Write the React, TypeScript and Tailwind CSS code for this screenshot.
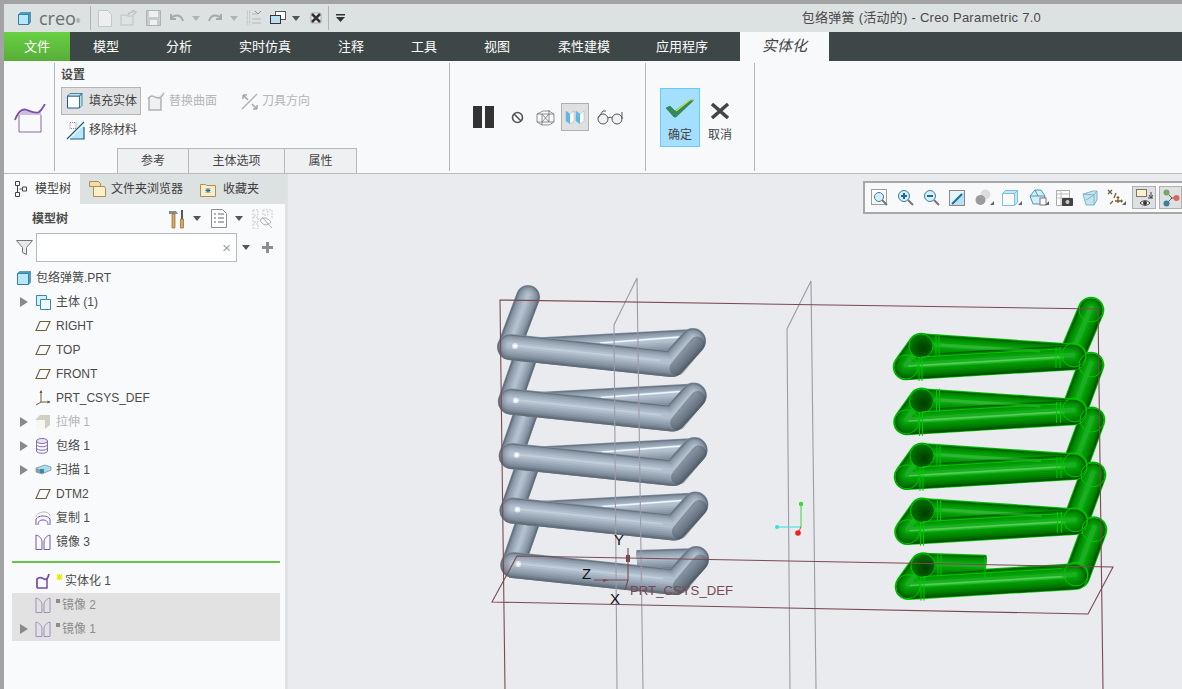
import type { ReactNode } from "react"

const sans = "font-['Liberation_Sans','Noto_Sans_CJK_SC',sans-serif]"

function Ico({ w, h, className, children }: { w: number; h: number; className?: string; children: ReactNode }) {
    return (
        <svg width={w} height={h} viewBox={`0 0 ${w} ${h}`} className={"shrink-0 block " + (className || "")} fill="none">
            {children}
        </svg>
    )
}

const Drop = ({ className, c = "#555" }: { className?: string; c?: string }) => (
    <Ico w={8} h={5} className={className}><path d="M0 0h8L4 5z" fill={c} /></Ico>
)

const Cube = ({ s = 16 }: { s?: number }) => (
    <Ico w={s} h={s}>
        <path d={`M1.500 3.500h${s - 5}v${s - 5}h-${s - 5}z`} fill="#b8e6fb" stroke="#2f7fa3" />
        <path d={`M1.500 3.500l2-2h${s - 5}l-2 2zM${s - 3.5} 3.500l2-2v${s - 5}l-2 2z`} fill="#4f9cc0" stroke="#2f7fa3" strokeWidth=".6" />
    </Ico>
)

const Plane = () => (
    <Ico w={16} h={12}><path d="M5 1.500h10l-4 9H1z" stroke="#6e5a3c" strokeWidth="1.100" /></Ico>
)

const Mirror = ({ faded }: { faded?: boolean }) => (
    <Ico w={16} h={16} className={faded ? "opacity-60" : ""}>
        <path d="M1 15.500V1c4 1 6 4 6 7v7.500zM15 15.500V1c-4 1-6 4-6 7v7.500z" stroke="#7a58a8" strokeWidth="1" />
    </Ico>
)

const Arrow = () => (
    <Ico w={8} h={10}><path d="M0 0l8 5-8 5z" fill="#8a8a8a" /></Ico>
)

const treeRows: { label: string; arrow?: boolean; icon: ReactNode; faded?: boolean }[] = [
    { label: "主体 (1)", arrow: true, icon: <Ico w={17} h={17}><path d="M1.500 1.500h10v10h-10z" fill="#d6f0fb" stroke="#3c88ad" /><path d="M5.500 5.500h10v10h-10z" fill="#eef9fe" stroke="#3c88ad" /></Ico> },
    { label: "RIGHT", icon: <Plane /> },
    { label: "TOP", icon: <Plane /> },
    { label: "FRONT", icon: <Plane /> },
    { label: "PRT_CSYS_DEF", icon: <Ico w={16} h={16}><path d="M6 1v11M6 12h9M6 12l-5 3" stroke="#6e5a3c" /><path d="M6 0l-1.500 3h3zM15.500 12l-3-1.500v3z" fill="#6e5a3c" /></Ico> },
    { label: "拉伸 1", arrow: true, faded: true, icon: <Ico w={16} h={16}><path d="M5 1h10v10l-5 4H1V5z" fill="#cfcfc4" /><path d="M1 6h9v9H1z" fill="#f6f6f2" /></Ico> },
    { label: "包络 1", arrow: true, icon: <Ico w={14} h={16}><ellipse cx="7" cy="3" rx="5.500" ry="2.500" fill="#e9e2f2" stroke="#8a6fb0" /><path d="M1.500 3v10c0 3 11 3 11 0V3M1.500 6.500c0 3 11 3 11 0M1.500 10c0 3 11 3 11 0" stroke="#8a6fb0" /></Ico> },
    { label: "扫描 1", arrow: true, icon: <Ico w={17} h={12}><path d="M1 4l9-3 6 2v3l-9 4-6-2z" fill="#a6dcee" stroke="#6f8d99" strokeWidth=".7" /><path d="M1 4l6 2v4l-6-2z" fill="#8d9ba3" /><rect x="5" y="5" width="4" height="4" fill="#3c88ad" /></Ico> },
    { label: "DTM2", icon: <Plane /> },
    { label: "复制 1", icon: <Ico w={16} h={16}><path d="M1 7c0-5 13-8 14-1" stroke="#b8b8b8" fill="#fff" /><path d="M1 15V9c2-2 3-3 7-3s5 1 7 3v6M3 15c0-4 2-5 5-5s5 1 5 5" stroke="#7a58a8" /></Ico> },
    { label: "镜像 3", icon: <Mirror /> },
]

function TreeRow({ arrow, icon, label, faded, mark }: { arrow?: boolean; icon: ReactNode; label: string; faded?: boolean; mark?: ReactNode }) {
    return (
        <div className="flex h-6 items-center">
            <div className="w-[31px] flex justify-end pr-[7px]">{arrow && <Arrow />}</div>
            <div className="w-[21px] flex justify-start">{icon}</div>
            {mark}
            <span className={"text-xs " + (faded ? "text-[#b5b5b5]" : "text-[#4b4b4b]")}>{label}</span>
        </div>
    )
}

function ModelTreePanel() {
    return (
        <div className="w-[284px] shrink-0 flex flex-col bg-[#f8fafb] border-r-[3px] border-[#e0e3e6]">
            <div className="flex h-[30px] bg-[#dce1e1] text-xs text-[#3d3d3d]">
                <div className="w-[76px] bg-[#f8fafb] flex items-center pl-[11px] gap-[8px]">
                    <Ico w={12} h={16}><path d="M.5.500h4v4h-4zM.5 11.500h4v4h-4zM7.500 6h4v4h-4zM2.500 5v6M4.500 8h3" stroke="#444" /></Ico>
                    <span>模型树</span>
                </div>
                <div className="flex items-center pl-[8px] gap-[4px]">
                    <Ico w={19} h={18}><path d="M1.500 1.500h9l2 2v3h-11z" fill="#f2dca8" stroke="#b08d50" /><path d="M5.500 6.500h11l1 2v8h-12z" fill="#fbeec8" stroke="#b08d50" /></Ico>
                    <span>文件夹浏览器</span>
                </div>
                <div className="flex items-center pl-[17px] gap-[7px]">
                    <Ico w={16} h={15}><path d="M.5 2.500h5l1 1h9v11H.5z" fill="#fbeec8" stroke="#b08d50" /><path d="M8 6v5M5.500 8.500h5M6 6.500l4 4M10 6.500l-4 4" stroke="#1a6f96" /></Ico>
                    <span>收藏夹</span>
                </div>
            </div>

            <div className="flex h-[29px] items-center">
                <span className="ml-[28px] text-xs font-bold text-[#4a4a4a] w-[136px]">模型树</span>
                <Ico w={17} h={20}>
                    <path d="M1 2h7l2 3H1z" fill="#8a8a8a" />
                    <path d="M4 5h3v14H4z" fill="#d9a860" stroke="#8c6a38" strokeWidth=".7" />
                    <path d="M14 1v9" stroke="#555" strokeWidth="2" />
                    <path d="M12.500 10h3v9h-3z" fill="#d9a860" stroke="#8c6a38" strokeWidth=".7" />
                </Ico>
                <Drop className="ml-[8px]" />
                <Ico w={16} h={19} className="ml-[10px]">
                    <path d="M.5.500h11l4 4v14H.5z" fill="#fff" stroke="#8a8f92" />
                    <path d="M3 5h2M3 9h2M3 13h2M7 5h6M7 9h6M7 13h6" stroke="#5d6468" />
                </Ico>
                <Drop className="ml-[8px]" />
                <Ico w={21} h={20} className="ml-[9px] opacity-40">
                    <path d="M1 1h5v5H1zM1 8h5v5H1zM1 15h5v5H1zM11 1h5v5h-5zM17 1h3v9" stroke="#888" strokeDasharray="2 1" />
                    <path d="M8 11c3-3 7-3 11 2-4 4-8 4-11-2zM10 8l10 11" stroke="#444" />
                </Ico>
            </div>

            <div className="flex h-[29px] items-center">
                <Ico w={17} h={15} className="ml-[12px]"><path d="M.5.500h16l-6 7v7l-4-2v-5z" fill="#e8eaea" stroke="#777" /></Ico>
                <div className="ml-[3px] w-[201px] h-[29px] bg-white border border-[#b4bcbc] flex items-center justify-end pr-[5px]">
                    <span className="text-[15px] leading-none text-[#9aa0a3]">×</span>
                </div>
                <Drop className="ml-[5px]" />
                <Ico w={13} h={13} className="ml-[11px]"><path d="M5 1h3v4h4v3H8v4H5V8H1V5h4z" fill="#8e8e8e" /></Ico>
            </div>

            <div className="mt-[4px] flex h-6 items-center">
                <div className="w-[12px]" />
                <div className="w-[20px]"><Cube /></div>
                <span className="text-xs text-[#4b4b4b]">包络弹簧.PRT</span>
            </div>

            {treeRows.map((r) => (
                <TreeRow key={r.label} {...r} />
            ))}

            <div className="ml-[8px] mt-[7px] h-[2px] w-[268px] bg-[#66c544]" />

            <div className="mt-[6px]">
                <TreeRow
                    label="实体化 1"
                    mark={<Ico w={9} h={12} className="self-start mt-[4px]"><path d="M3.500 1v6M.5 4h6M1 1.500l5 5M6 1.500l-5 5" stroke="#e8e800" strokeWidth="1.200" /></Ico>}
                    icon={
                        <Ico w={16} h={16}><path d="M2 15V6c3-3 5-1 7 0s4 0 5-5" stroke="#7a4fa8" strokeWidth="1.800" /><path d="M2 15h10V6" stroke="#7a4fa8" strokeWidth="1.500" /></Ico>
                    }
                />
            </div>
            <div className="ml-[8px] w-[268px] bg-[#e2e2e2]">
                {["镜像 2", "镜像 1"].map((l, i) => (
                    <div key={l} className="flex h-6 items-center -ml-[8px]">
                        <div className="w-[31px] flex justify-end pr-[7px]">{i === 1 && <Arrow />}</div>
                        <div className="w-[21px]"><Mirror faded /></div>
                        <div className="w-[4px] h-[4px] mr-[2px] self-start mt-[6px] bg-[#8c8c8c]" />
                        <span className="text-xs text-[#8c8c8c]">{l}</span>
                    </div>
                ))}
            </div>
        </div>
    )
}

type Layer = { d: number; c: string; y: number }

// lighter upper rim, dark lower rim, bright band above the centre line
const grayLayers: Layer[] = [
    { d: 0, c: "#84919f", y: 0 },
    { d: 0.800, c: "#626e7b", y: 0.400 },
    { d: 3.500, c: "#74818f", y: -0.400 },
    { d: 6, c: "#84919f", y: -1 },
    { d: 9, c: "#909dac", y: -1.500 },
    { d: 12.500, c: "#9ba8b7", y: -1.800 },
    { d: 16, c: "#a6b3c2", y: -2 },
    { d: 20, c: "#b2bfcd", y: -2 },
]
const greenLayers: Layer[] = [
    { d: 0, c: "#008a00", y: 0 },
    { d: 0.800, c: "#005400", y: 0.400 },
    { d: 3.500, c: "#006c00", y: -0.400 },
    { d: 6, c: "#007e00", y: -1 },
    { d: 9, c: "#008c00", y: -1.500 },
    { d: 12.500, c: "#009804", y: -1.800 },
    { d: 16, c: "#06a20c", y: -2 },
    { d: 20, c: "#1cae22", y: -2 },
]

function Tube({ d, w, layers, cap = "round" }: { d: string; w: number; layers: Layer[]; cap?: "round" | "butt" }) {
    return (
        <g fill="none" strokeLinecap={cap} strokeLinejoin="round">
            {layers.map((l, i) =>
                w - l.d > 0 ? <path key={i} d={d} stroke={l.c} strokeWidth={w - l.d} transform={`translate(0 ${l.y})`} /> : null,
            )}
        </g>
    )
}

const rows = [0, 1, 2, 3, 4]

function GraySpring() {
    return (
        <g>
            <Tube d="M528 297L511 342" w={24} layers={grayLayers} />
            {[0, 1, 2, 3].map((i) => (
                <Tube key={i} d={`M${525 + i} ${358 + i * 54.500}L${511 + i} ${398 + i * 54.500}`} w={24} layers={grayLayers} />
            ))}
            {rows.map((i) => {
                const y = i * 54.500
                const x = i * 0.800
                const turn = `${693 + x} ${341 + y}`
                const end = `${672 + x} ${364 + y}`
                return (
                    <g key={i}>
                        {i < 4 ? (
                            <Tube d={`M${527 + x} ${350 + y}L${turn}L${end}`} w={24} layers={grayLayers} />
                        ) : (
                            <Tube d={`M637 ${343 + y}L${turn}`} w={22} layers={grayLayers} cap="butt" />
                        )}
                        {i < 4 && (
                            <g stroke="#eef7fd">
                                <path d={`M${590 + x} ${344 + y}L${680 + x} ${337 + y}`} strokeWidth="3" opacity=".2" />
                                <path d={`M${600 + x} ${343 + y}L${680 + x} ${337 + y}`} strokeWidth="1.300" />
                            </g>
                        )}
                        <Tube d={`M${510 + x} ${347 + y}L${end}L${turn}`} w={26} layers={grayLayers} />
                        <g stroke="#3f4a55" strokeLinecap="round" opacity=".4" fill="none">
                            <path d={`M${677 + x} ${368 + y}L${697 + x} ${344 + y}`} strokeWidth="15" />
                            <path d={`M${679 + x} ${370 + y}L${699 + x} ${346 + y}`} strokeWidth="10" />
                            <path d={`M${680 + x} ${371 + y}L${700 + x} ${347 + y}`} strokeWidth="6" />
                        </g>
                        <path d={`M${515 + x} ${345.500 + y}L${660 + x} ${360.500 + y}`} stroke="#c6d3e0" strokeWidth="2" opacity=".7" />
                        <circle cx={515 + x} cy={346 + y} r="3" fill="#fff" opacity=".6" />
                        <circle cx={515 + x} cy={346 + y} r="1.500" fill="#fff" />
                    </g>
                )
            })}
        </g>
    )
}

function GreenSpring() {
    const o = "#00c800"
    const edge = (d: string, w: number, key: string, cap: "round" | "butt" = "round") => (
        <path key={key} d={d} stroke={o} strokeWidth={w + 1.600} strokeLinecap={cap} strokeLinejoin="round" />
    )
    return (
        <g>
            <defs>
                <radialGradient id="endFace" cx="0.600" cy="0.600" r="0.600">
                    <stop offset="0" stopColor="#003c00" />
                    <stop offset="1" stopColor="#007400" />
                </radialGradient>
            </defs>
            {edge("M1091 310L1072 355", 25, "s")}
            <Tube d="M1091 310L1072 355" w={25} layers={greenLayers} />
            {[0, 1, 2, 3].map((i) => {
                const d = `M${1091 + i} ${365 + i * 54.900}L${1074 + i} ${411 + i * 54.900}`
                return (
                    <g key={i}>
                        {edge(d, 25, "l")}
                        <Tube d={d} w={25} layers={greenLayers} />
                    </g>
                )
            })}
            {rows.map((i) => {
                const y = i * 54.900
                const x = i * 0.500
                const fl = `${906 + x} ${367 + y}`
                const bl = `${921 + x} ${346 + y}`
                const back = i < 4 ? `M${1068 + x} ${356 + y}L${bl}L${fl}` : `M986 ${348 + y}L${bl}L${fl}`
                const front = `M${1073 + x} ${357 + y}L${fl}L${bl}`
                return (
                    <g key={i}>
                        {edge(back, 24, "b", i < 4 ? "round" : "butt")}
                        {edge(front, 25, "f")}
                        <Tube d={back} w={24} layers={greenLayers} cap={i < 4 ? "round" : "butt"} />
                        <Tube d={front} w={25} layers={greenLayers} />
                        <circle cx={921 + x} cy={346 + y} r="12" fill="url(#endFace)" stroke={o} />
                        <path d={`M${920 + x} ${366 + y}L${1064 + x} ${357.500 + y}`} stroke="#4ccb4c" strokeWidth="3" opacity=".45" />
                        <path d={`M${908 + x} ${366 + y}L${1060 + x} ${357 + y}`} stroke="#5fd85f" strokeWidth="1.500" opacity=".7" />
                        {i < 4 && <path d={`M${940 + x} ${345 + y}L${1040 + x} ${351 + y}`} stroke="#3dbd3d" strokeWidth="3" opacity=".5" />}
                        <circle cx={906 + x} cy={367 + y} r="12" stroke={o} />
                        <path
                            d={`M${919 + x} ${357 + y}v24M${922 + x} ${357 + y}v24M${939 + x} ${334 + y}v23M${936 + x} ${334 + y}v23M${921 + x} ${357 + y}L${1060 + x} ${349 + y}`}
                            stroke={o}
                        />
                        {i < 4 ? (
                            <path d={`M${1056 + x} ${347 + y}v21M${1060 + x} ${347 + y}v21`} stroke={o} />
                        ) : (
                            <path d={`M${985} ${337 + y}v21`} stroke={o} />
                        )}
                        {i < 4 ? <circle cx={1074 + x} cy={355 + y} r="12" stroke={o} /> : null}
                    </g>
                )
            })}
            {[0, 1, 2, 3].map((i) => (
                <circle key={i} cx={1091 + i} cy={365 + i * 54.900} r="12" stroke={o} />
            ))}
            <circle cx="1091" cy="310" r="12" stroke={o} />
            <circle cx="1076" cy="574" r="12" stroke={o} />
        </g>
    )
}

function Viewport() {
    return (
        <svg viewBox="288 174 894 515" width="894" height="515" className="block absolute inset-0" fill="none">
            <GraySpring />
            <GreenSpring />
            <g stroke="#9c9ca6" strokeWidth="1.100">
                <path d="M617 689L614 325L637 278L643 689" />
                <path d="M790 689L787 329L811 281L816 689" />
            </g>
            <g stroke="#7a4a50" strokeWidth="1.100">
                <path d="M505 689L500 300L1098 309L1103 689" />
                <path d="M517 556L1113 567L1088 614L492 602z" />
                <path d="M628 548V580H594M628 580l-3 10" />
            </g>
            <path d="M626 555h4v7h-4zM603 579l6 1-6 2z" fill="#7a4a50" />
            <text x="630" y="595" fontSize="13.200" fill="#7a4a50" fontFamily="Liberation Sans">PRT_CSYS_DEF</text>
            <g fontSize="15" fill="#111" fontFamily="Liberation Sans">
                <text x="614" y="545">Y</text>
                <text x="582" y="579">Z</text>
                <text x="610" y="604">X</text>
            </g>
            <path d="M801 527H777" stroke="#33e0e0" />
            <path d="M801 504V527" stroke="#33dd33" />
            <path d="M801 527l-3 6" stroke="#ee3333" />
            <circle cx="801" cy="504" r="2.200" fill="#33dd33" />
            <circle cx="777" cy="527" r="2" fill="#33e0e0" />
            <circle cx="798" cy="533" r="2.800" fill="#ee2222" />
        </svg>
    )
}

const Corner = ({ className }: { className?: string }) => (
    <Ico w={4} h={4} className={"absolute right-[-1px] bottom-[1px] " + (className || "")}><path d="M4 0v4H0z" fill="#666" /></Ico>
)

function ViewToolbar() {
    return (
        <div className="absolute right-0 top-[7px] w-[319px] h-[33px] bg-[#f8f9fb] border-2 border-r-0 border-[#a8a8a8] flex items-center pl-[6px]">
            <Ico w={17} h={17}><rect x=".5" y=".5" width="15" height="15" stroke="#9aa0a5" fill="#fff" /><circle cx="8" cy="8" r="4.500" stroke="#3c7f9f" fill="#d8eef8" /><path d="M11 11l5 5" stroke="#777" strokeWidth="2" /></Ico>
            <Ico w={17} h={17} className="ml-[9px]"><circle cx="7" cy="7" r="5.500" stroke="#3c7f9f" fill="#d8eef8" /><path d="M4 7h6M7 4v6" stroke="#1a6f96" strokeWidth="2" /><path d="M11 11l5 5" stroke="#777" strokeWidth="2" /></Ico>
            <Ico w={17} h={17} className="ml-[9px]"><circle cx="7" cy="7" r="5.500" stroke="#3c7f9f" fill="#d8eef8" /><path d="M4 7h6" stroke="#1a6f96" strokeWidth="2" /><path d="M11 11l5 5" stroke="#777" strokeWidth="2" /></Ico>
            <Ico w={16} h={16} className="ml-[9px]"><rect x=".5" y=".5" width="15" height="15" stroke="#888" fill="#e4f4fc" /><path d="M2 15L15 2v13z" fill="#b8e0f2" /><path d="M3 14L13 4" stroke="#1f6f92" strokeWidth="2" /></Ico>
            <div className="relative ml-[10px] w-[18px]">
                <Ico w={16} h={17}><circle cx="10.500" cy="5.500" r="5" fill="#dcdcdc" /><circle cx="5.500" cy="11" r="5" fill="#9b9b9b" /></Ico>
                <Corner />
            </div>
            <div className="relative ml-[9px] w-[19px]">
                <Ico w={16} h={16}><path d="M.5 3.500h12v12H.5z" fill="#fff" stroke="#79c1de" /><path d="M.5 3.500l3-3h12l-3 3zM12.500 3.500l3-3v12l-3 3z" fill="#c4e6f4" stroke="#79c1de" /></Ico>
                <Corner />
            </div>
            <div className="relative ml-[8px] w-[19px]">
                <Ico w={18} h={17}><path d="M1 7l5-6h6l4 6-3 8H4z" fill="#d6eef8" stroke="#4a96b8" /><path d="M1 7h15M6 1l3 6" stroke="#4a96b8" /><rect x="11" y="9" width="6" height="7" fill="#fff" stroke="#777" /></Ico>
                <Corner />
            </div>
            <Ico w={17} h={16} className="ml-[8px]"><path d="M.5.500h13v15H.5z" fill="#fff" stroke="#aaa" /><path d="M.5 4h13M.5 8h13M5 .5v15" stroke="#bbb" /><rect x="6" y="8" width="11" height="8" rx="1" fill="#444" /><circle cx="11.500" cy="12" r="2" fill="#ccc" /></Ico>
            <Ico w={16} h={16} className="ml-[9px]"><path d="M1 4l10-3h4v9l-3 5H4z" fill="#c6e4f0" stroke="#7fb5cc" /><path d="M1 4l11 1v10M12 5l3-4M4 10l8-5" stroke="#7fb5cc" /></Ico>
            <div className="relative ml-[9px] w-[18px]">
                <Ico w={17} h={17}><path d="M1 1l4 4M5 1L1 5M7 9l2-5M3 15l3-3M8 12h7M11 8v6" stroke="#7a5c2e" strokeWidth="1.300" /><path d="M11 7l-2 2h4zM16 12l-2-2v4z" fill="#7a5c2e" /></Ico>
                <Corner />
            </div>
            <div className="ml-[7px] w-[24px] h-[23px] bg-[#dfe0e2] border border-[#b0b0b0] flex items-center justify-center">
                <Ico w={17} h={18}><rect x=".5" y=".5" width="10" height="7" fill="#fbf2cc" stroke="#777" /><path d="M15 3v6M12 9h5M13 6l2 3 2-3" stroke="#444" /><path d="M4 14c3-3 7-3 10 0-3 3-7 3-10 0z" stroke="#333" fill="#fff" /><circle cx="9" cy="14" r="2" fill="#333" /></Ico>
            </div>
            <div className="ml-[3px] w-[23px] h-[23px] bg-[#dfe0e2] border border-[#b0b0b0] flex items-center justify-center">
                <Ico w={18} h={18}><path d="M5 4l5 5-5 5M10 9h4" stroke="#555" /><circle cx="4.500" cy="3.500" r="3" fill="#72a868" /><circle cx="4.500" cy="14.500" r="3" fill="#3c7f9f" /><circle cx="14.500" cy="9" r="3" fill="#d26a60" /></Ico>
            </div>
        </div>
    )
}

const tabs = [
    { t: "模型", w: "w-[72px]" },
    { t: "分析", w: "w-[74px]" },
    { t: "实时仿真", w: "w-[98px]" },
    { t: "注释", w: "w-[74px]" },
    { t: "工具", w: "w-[72px]" },
    { t: "视图", w: "w-[74px]" },
    { t: "柔性建模", w: "w-[100px]" },
    { t: "应用程序", w: "w-[96px]" },
]

const Sep = () => <div className="w-[1px] shrink-0 my-[2px] bg-[#b2b4b6]" />

export default function App() {
    return (
        <div className={"w-[1182px] h-[689px] overflow-hidden bg-[#a3a3a3] pl-[4px] pt-[4px] flex flex-col " + sans}>
            <div className="h-[28px] shrink-0 bg-[#dce1e1] flex items-center">
                <div className="ml-[13px]"><Cube s={15} /></div>
                <span className="ml-[7px] text-[18px] leading-none text-[#6a6e70] font-['Open_Sans',sans-serif] w-[45px]">creo<sup className="text-[5px]">®</sup></span>
                <div className="ml-[6px] w-[1px] h-[24px] bg-[#b0b4b4]" />
                <Ico w={14} h={17} className="ml-[7px]"><path d="M.5.500h9l4 4v12H.5z" fill="#edefef" stroke="#c4c8c8" /></Ico>
                <Ico w={17} h={16} className="ml-[8px]"><path d="M1 15V5h5l1 1h6v9z" fill="#dfe2e2" stroke="#bcc0c0" /><path d="M8 5c1-3 3-3 5-3M12 0l4 2-3 3" stroke="#bcc0c0" strokeWidth="1.500" /></Ico>
                <Ico w={15} h={16} className="ml-[9px]"><path d="M.5.500h14v15H.5z" fill="#c8cccc" stroke="#aeb2b2" /><path d="M3 1h9v6H3zM4 10h7v5H4z" fill="#eef0f0" /></Ico>
                <Ico w={16} h={12} className="ml-[8px]"><path d="M2 2v5h5M2 7c3-5 10-5 12 2" stroke="#a6aaaa" strokeWidth="2" /></Ico>
                <Drop c="#b0b4b4" className="ml-[7px]" />
                <Ico w={16} h={12} className="ml-[7px]"><path d="M14 2v5H9M14 7C11 2 4 2 2 9" stroke="#a6aaaa" strokeWidth="2" /></Ico>
                <Drop c="#b0b4b4" className="ml-[7px]" />
                <Ico w={15} h={16} className="ml-[8px]"><path d="M1 1h3v3H1zM1 6h3v3H1zM1 11h3v3H1z" stroke="#b4b8b8" strokeDasharray="1 1" /><path d="M6 4h5M6 9h9M6 13h9" stroke="#b4b8b8" /><path d="M9 1l3 3 3-3" stroke="#8c9090" /></Ico>
                <Ico w={16} h={15} className="ml-[9px]"><rect x="5.500" y=".5" width="10" height="8" fill="#fff" stroke="#555" /><rect x=".5" y="4.500" width="10" height="8" fill="#b8e0f2" stroke="#333" /></Ico>
                <Drop className="ml-[6px]" />
                <Ico w={12} h={12} className="ml-[10px]"><path d="M1 1h10v10H1z" fill="#eee" stroke="#999" strokeWidth=".7" /><path d="M2 2l8 8M10 2l-8 8" stroke="#333" strokeWidth="2.500" /></Ico>
                <div className="ml-[6px] w-[1px] h-[24px] bg-[#b0b4b4]" />
                <Ico w={9} h={8} className="ml-[7px]"><path d="M0 0h9v1.500H0zM0 3h9L4.500 8z" fill="#333" /></Ico>
                <span className="ml-auto mr-[141px] text-[13px] tracking-[0.25px] text-[#4a4a4a]">包络弹簧 (活动的) - Creo Parametric 7.0</span>
            </div>

            <div className="h-[29px] shrink-0 bg-[#3e4748] flex text-[13px] text-white">
                <div className="w-[66px] bg-gradient-to-b from-[#68d043] to-[#58ad38] flex items-center justify-center">文件</div>
                {tabs.map((t) => (
                    <div key={t.t} className={t.w + " flex items-center justify-center"}>{t.t}</div>
                ))}
                <div className="ml-[10px] w-[89px] bg-[#f8f9fb] flex items-center justify-center italic text-[15px] text-[#444]">实体化</div>
            </div>

            <div className="h-[113px] shrink-0 bg-[#f8f9fb] border-b border-[#bcbcbc] flex text-xs text-[#444]">
                <div className="w-[50px] flex items-center justify-center pl-[2px] pt-[3px]">
                    <Ico w={32} h={30}>
                        <path d="M5 11C9 5 13 6 17 8s7 2 10-3v6z" fill="#cdbde0" />
                        <path d="M5 28V11M27 11V28H5" stroke="#8c64a8" />
                        <path d="M1 16C4 8 8 4 13 6c5 2 9 4 12 2 3-2 4-5 6-8" stroke="#7a4fa8" strokeWidth="1.800" />
                    </Ico>
                </div>
                <Sep />
                <div className="w-[394px] flex flex-col pl-[6px]">
                    <div className="pt-[6px] h-[26px] font-bold text-[#4a4a4a]">设置</div>
                    <div className="flex items-center">
                        <div className="w-[80px] h-[28px] bg-[#e0e1e3] border border-[#b5b5b5] flex items-center pl-[5px] gap-[6px]">
                            <Ico w={16} h={16}><path d="M.5 3h12v12H.5z" fill="#fff" stroke="#1d5f80" /><path d="M.5 3l2.500-2.500h12L12.500 3zM12.500 3L15 .5v12l-2.500 2.500z" fill="#b8e0f2" stroke="#1d5f80" strokeWidth=".7" /></Ico>
                            <span>填充实体</span>
                        </div>
                        <div className="ml-[4px] flex items-center gap-[4px] text-[#b4b6b8]">
                            <Ico w={20} h={19}><path d="M3 7c4-6 6-1 10-1s4-3 6-5M4 6v12h12V6" stroke="#b0b2b4" strokeWidth="1.500" fill="#f0f1f2" /></Ico>
                            <span>替换曲面</span>
                        </div>
                        <div className="ml-[24px] flex items-center gap-[4px] text-[#b4b6b8]">
                            <Ico w={17} h={17}><path d="M1 16L16 1" stroke="#b0b2b4" strokeWidth="1.500" /><path d="M2 2l5 5M2 2v4M2 2h4M11 11l5 5M16 16v-4M16 16h-4" stroke="#a4a6a8" strokeWidth="1.500" /></Ico>
                            <span>刀具方向</span>
                        </div>
                    </div>
                    <div className="mt-[3px] h-[24px] flex items-center pl-[5px] gap-[4px]">
                        <Ico w={19} h={19}><path d="M4 1.500h6v6H4z" stroke="#888" strokeDasharray="1 1" /><path d="M4 18h14V4z" fill="#b8e6fb" /><path d="M1 18L18 1M4 18h14V6" stroke="#1d5f80" strokeWidth="1.200" /></Ico>
                        <span>移除材料</span>
                    </div>
                    <div className="mt-auto ml-[56px] flex h-[25px] text-[#444]">
                        {[
                            { t: "参考", w: "w-[72px]" },
                            { t: "主体选项", w: "w-[97px]" },
                            { t: "属性", w: "w-[73px]" },
                        ].map((x) => (
                            <div key={x.t} className={x.w + " bg-[#eff0f2] border border-b-0 border-[#b8b8b8] -mr-[1px] flex items-center justify-center"}>{x.t}</div>
                        ))}
                    </div>
                </div>
                <Sep />
                <div className="w-[195px] flex items-center pl-[23px]">
                    <div className="flex gap-[3px]">
                        <div className="w-[9px] h-[22px] bg-[#333]" />
                        <div className="w-[9px] h-[22px] bg-[#333]" />
                    </div>
                    <Ico w={13} h={13} className="ml-[17px]"><circle cx="6.500" cy="6.500" r="5" stroke="#555" strokeWidth="1.600" /><path d="M3 3l7 7" stroke="#555" strokeWidth="1.600" /></Ico>
                    <Ico w={19} h={17} className="ml-[12px]"><path d="M1 5l6-3 6 0 5 3v8l-5 3H6l-5-3zM6 5v11M13 1v12M1 5h17M1 13h17M6 5l7 8M13 5l-7 8" stroke="#666" strokeWidth=".7" /></Ico>
                    <div className="ml-[6px] w-[28px] h-[28px] bg-[#dfe0e2] border border-[#b0b0b0] flex items-center justify-center">
                        <Ico w={20} h={15}><path d="M1 1l4 3 4-3v10l-4 3-4-3z" fill="#fff" stroke="#9ab" strokeWidth=".5" /><path d="M11 1l4 3 4-3v10l-4 3-4-3z" fill="#fff" stroke="#9ab" strokeWidth=".5" /><path d="M1 1l4 3v10l-4-3zM11 1l4 3v10l-4-3z" fill="#5cb8e6" /></Ico>
                    </div>
                    <Ico w={27} h={15} className="ml-[8px]"><circle cx="6" cy="9" r="5" stroke="#555" fill="#eef3f6" /><circle cx="20" cy="9" r="5" stroke="#555" fill="#eef3f6" /><path d="M11 8c1-1 3-1 4 0M1 8l5-7h3M25 9V2" stroke="#555" /></Ico>
                </div>
                <Sep />
                <div className="w-[108px] flex items-start pl-[14px] pt-[27px]">
                    <div className="w-[40px] h-[59px] bg-[#a4dfff] border border-[#6cc8ff] flex flex-col items-center pt-[10px]">
                        <Ico w={30} h={19}><path d="M1 9l4-2 5 5L25 1h4L11 18h-2z" fill="#358a58" stroke="#2c6f48" strokeWidth=".6" /><path d="M11 12L25 1h4" stroke="#c8e83c" strokeWidth="1.200" /></Ico>
                        <span className="mt-[9px]">确定</span>
                    </div>
                    <div className="ml-[8px] w-[24px] flex flex-col items-center pt-[15px]">
                        <Ico w={20} h={16}><path d="M2 1l16 14M18 1L2 15" stroke="#444" strokeWidth="3.500" /></Ico>
                        <span className="mt-[8px]">取消</span>
                    </div>
                </div>
                <Sep />
            </div>

            <div className="flex-1 flex min-h-0">
                <ModelTreePanel />
                <div className="relative flex-1 bg-[#e9ebef]">
                    <Viewport />
                    <ViewToolbar />
                </div>
            </div>
        </div>
    )
}
